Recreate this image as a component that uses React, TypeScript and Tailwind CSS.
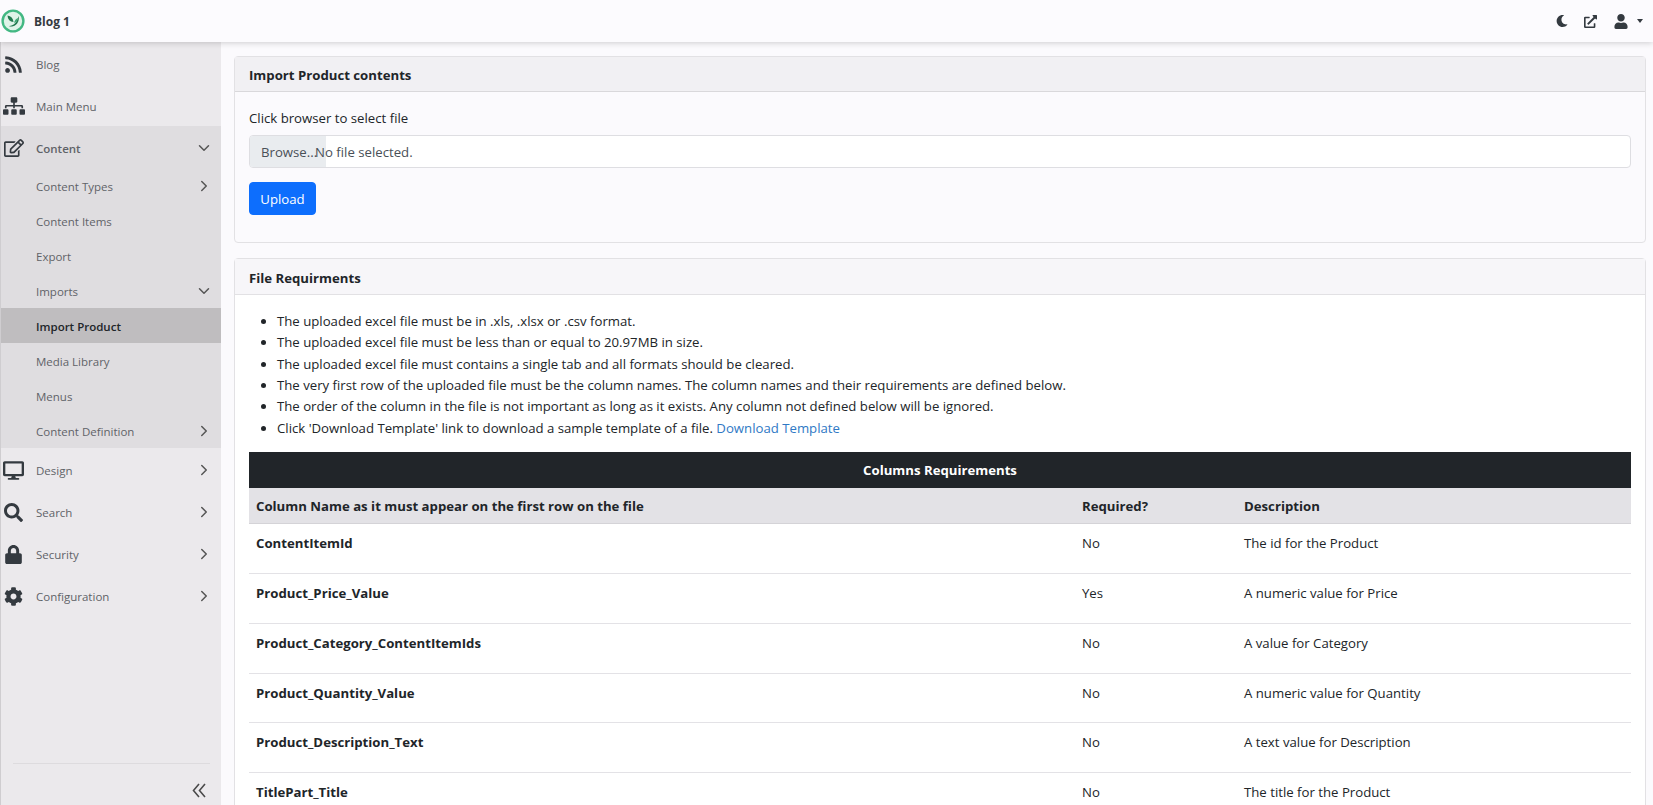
import React from "react";
import { ChevronDown, ChevronRight } from "lucide-react";
import {
  FaRss,
  FaSitemap,
  FaRegEdit,
  FaDesktop,
  FaSearch,
  FaLock,
  FaCog,
  FaMoon,
  FaExternalLinkAlt,
  FaUser,
} from "react-icons/fa";

const font = "font-['Open_Sans','Noto_Sans',sans-serif]";

function Chevron({ down }: { down?: boolean }) {
  return down ? (
    <ChevronDown className="ml-auto mr-[8px] mt-[1px] h-[18px] w-[18px] text-[#555]" strokeWidth={2} />
  ) : (
    <ChevronRight className="ml-auto mr-[8px] mt-[1px] h-[18px] w-[18px] text-[#555]" strokeWidth={2} />
  );
}

function TopItem({ icon, label, bold, chevron, down }: { icon: React.ReactNode; label: string; bold?: boolean; chevron?: boolean; down?: boolean }) {
  return (
    <div className="flex h-[42px] items-center">
      <div className="mr-[10px] mt-[2px] flex w-[25px] shrink-0 justify-center text-[#343a40]">{icon}</div>
      <span className={`pt-[4px] text-[11.5px] text-[#5f6368] ${bold ? "font-semibold" : ""}`}>{label}</span>
      {chevron && <Chevron down={down} />}
    </div>
  );
}

function SubItem({ label, chevron, down, active }: { label: string; chevron?: boolean; down?: boolean; active?: boolean }) {
  return (
    <div className={`flex h-[35px] items-center pl-[35px] ${active ? "bg-[#bfbdbf]" : ""}`}>
      <span className={`pt-[3px] text-[11.5px] ${active ? "font-semibold text-[#212529]" : "text-[#5f6368]"}`}>{label}</span>
      {chevron && <Chevron down={down} />}
    </div>
  );
}

const rows = [
  ["ContentItemId", "No", "The id for the Product"],
  ["Product_Price_Value", "Yes", "A numeric value for Price"],
  ["Product_Category_ContentItemIds", "No", "A value for Category"],
  ["Product_Quantity_Value", "No", "A numeric value for Quantity"],
  ["Product_Description_Text", "No", "A text value for Description"],
  ["TitlePart_Title", "No", "The title for the Product"],
];

const bullets = [
  "The uploaded excel file must be in .xls, .xlsx or .csv format.",
  "The uploaded excel file must be less than or equal to 20.97MB in size.",
  "The uploaded excel file must contains a single tab and all formats should be cleared.",
  "The very first row of the uploaded file must be the column names. The column names and their requirements are defined below.",
  "The order of the column in the file is not important as long as it exists. Any column not defined below will be ignored.",
];

export default function App() {
  return (
    <div className={`${font} flex h-[805px] w-[1653px] flex-col overflow-hidden bg-[#fbfafd] text-[13.2px] leading-[20px] text-[#212529]`}>
      <header className="relative z-10 flex h-[42px] shrink-0 items-center bg-[#fcfbfe] pl-[1px] pr-[10px] shadow-[0_1px_6px_rgba(0,0,0,0.18)]">
        <svg viewBox="0 0 24 24" className="h-[24px] w-[24px]">
          <circle cx="12" cy="12" r="10.4" fill="#dff3e8" stroke="#43b883" strokeWidth="2.4" />
          <path d="M6.5 6.5c3.5.4 5.6 2.6 6 6.5-3.6-.3-5.7-2.500-6-6.500z" fill="#23794f" />
          <path d="M17.500 7c1.200 4.500-1 9-5.500 10.300-1.500.4-3 .2-4.200-.4 4 .3 8.300-2.900 9.700-9.900z" fill="#23794f" />
          <path d="M13 14c.6-2.500 2-4.200 4-5-.4 2.600-1.800 4.300-4 5z" fill="#3aa873" />
        </svg>
        <span className="ml-[9px] pt-[1px] text-[12px] font-bold text-[#343a40]">Blog 1</span>
        <div className="ml-auto flex items-center text-[#343a40]">
          <FaMoon className="h-[12px] w-[12px]" />
          <FaExternalLinkAlt className="ml-[16px] h-[13px] w-[13px]" />
          <FaUser className="ml-[17px] h-[15px] w-[14px]" />
          <span className="ml-[9px] h-0 w-0 border-x-[3.5px] border-t-[4px] border-x-transparent border-t-[#343a40]" />
        </div>
      </header>

      <div className="flex min-h-0 flex-1">
        <aside className="flex w-[221px] shrink-0 flex-col border-l border-[#cfcdd0] bg-[#ebe9ec]">
          <TopItem icon={<FaRss className="h-[19px] w-[19px]" />} label="Blog" />
          <TopItem icon={<FaSitemap className="h-[22px] w-[22px]" />} label="Main Menu" />
          <div className="bg-[#dfdde0]">
            <TopItem icon={<FaRegEdit className="h-[20px] w-[20px]" />} label="Content" bold chevron down />
            <SubItem label="Content Types" chevron />
            <SubItem label="Content Items" />
            <SubItem label="Export" />
            <SubItem label="Imports" chevron down />
            <SubItem label="Import Product" active />
            <SubItem label="Media Library" />
            <SubItem label="Menus" />
            <SubItem label="Content Definition" chevron />
          </div>
          <TopItem icon={<FaDesktop className="h-[21px] w-[21px]" />} label="Design" chevron />
          <TopItem icon={<FaSearch className="h-[19px] w-[19px]" />} label="Search" chevron />
          <TopItem icon={<FaLock className="h-[19px] w-[19px]" />} label="Security" chevron />
          <TopItem icon={<FaCog className="h-[19px] w-[19px]" />} label="Configuration" chevron />
          <div className="ml-3 mr-[11px] mt-auto flex h-[42px] items-center justify-end border-t border-[#dddbde] pr-[4px] pt-[12px]">
            <svg viewBox="0 0 14 15" className="h-[15px] w-[14px] text-[#4a4a4a]" fill="none" stroke="currentColor" strokeWidth="1.6">
              <path d="M7 1 1.500 7.500 7 14M13 1 7.500 7.500 13 14" />
            </svg>
          </div>
        </aside>

        <main className="min-w-0 flex-1 pl-[13px] pr-[7px] pt-[14px]">
          <section className="rounded border border-[#e2e1e4] bg-[#fbfafd]">
            <div className="flex h-[35px] items-center border-b border-[#d9d8db] bg-[#f1f0f3] px-[14px] pt-[2px]">
              <span className="font-bold">Import Product contents</span>
            </div>
            <div className="px-[14px] pb-[27px] pt-[16px]">
              <div className="mb-[7px]">Click browser to select file</div>
              <div className="flex h-[33px] items-center overflow-hidden rounded border border-[#dedee2] bg-white">
                <div className="flex h-full w-[76px] shrink-0 items-center bg-[#e9ecef] pl-[11px] text-[#495057]">Browse...</div>
                <span className="-ml-[11px] text-[#495057]">No file selected.</span>
              </div>
              <button className="mt-[14px] h-[33px] w-[67px] rounded border border-[#0d6efd] bg-[#0d6efd] text-white">Upload</button>
            </div>
          </section>

          <section className="mt-[15px] rounded border border-[#e2e1e4] bg-white">
            <div className="flex h-[36px] items-center border-b border-[#e2e1e4] bg-[#f7f6f9] px-[14px] pt-[3px]">
              <span className="font-bold">File Requirments</span>
            </div>
            <div className="px-[14px] pt-[16px]">
              <ul className="list-disc pl-7 leading-[21.33px]">
                {bullets.map((b) => (
                  <li key={b}>{b}</li>
                ))}
                <li>
                  Click 'Download Template' link to download a sample template of a file.{" "}
                  <a className="text-[#2f79c5]">Download Template</a>
                </li>
              </ul>
              <table className="mt-[13px] w-full table-fixed border-collapse">
                <colgroup>
                  <col className="w-[826px]" />
                  <col className="w-[162px]" />
                  <col />
                </colgroup>
                <thead>
                  <tr className="h-[36px] bg-[#212529] text-white">
                    <th colSpan={3} className="text-center font-bold">Columns Requirements</th>
                  </tr>
                  <tr className="h-[36px] border-b border-[#d4d3d7] bg-[#e3e2e6]">
                    <th className="px-[7px] text-left font-bold">Column Name as it must appear on the first row on the file</th>
                    <th className="px-[7px] text-left font-bold">Required?</th>
                    <th className="px-[7px] text-left font-bold">Description</th>
                  </tr>
                </thead>
                <tbody>
                  {rows.map((r) => (
                    <tr key={r[0]} className="h-[49.7px] border-b border-[#e3e2e6]">
                      <td className="px-[7px] pt-[9px] align-top font-bold">{r[0]}</td>
                      <td className="px-[7px] pt-[9px] align-top">{r[1]}</td>
                      <td className="px-[7px] pt-[9px] align-top">{r[2]}</td>
                    </tr>
                  ))}
                </tbody>
              </table>
            </div>
          </section>
        </main>
      </div>
    </div>
  );
}
